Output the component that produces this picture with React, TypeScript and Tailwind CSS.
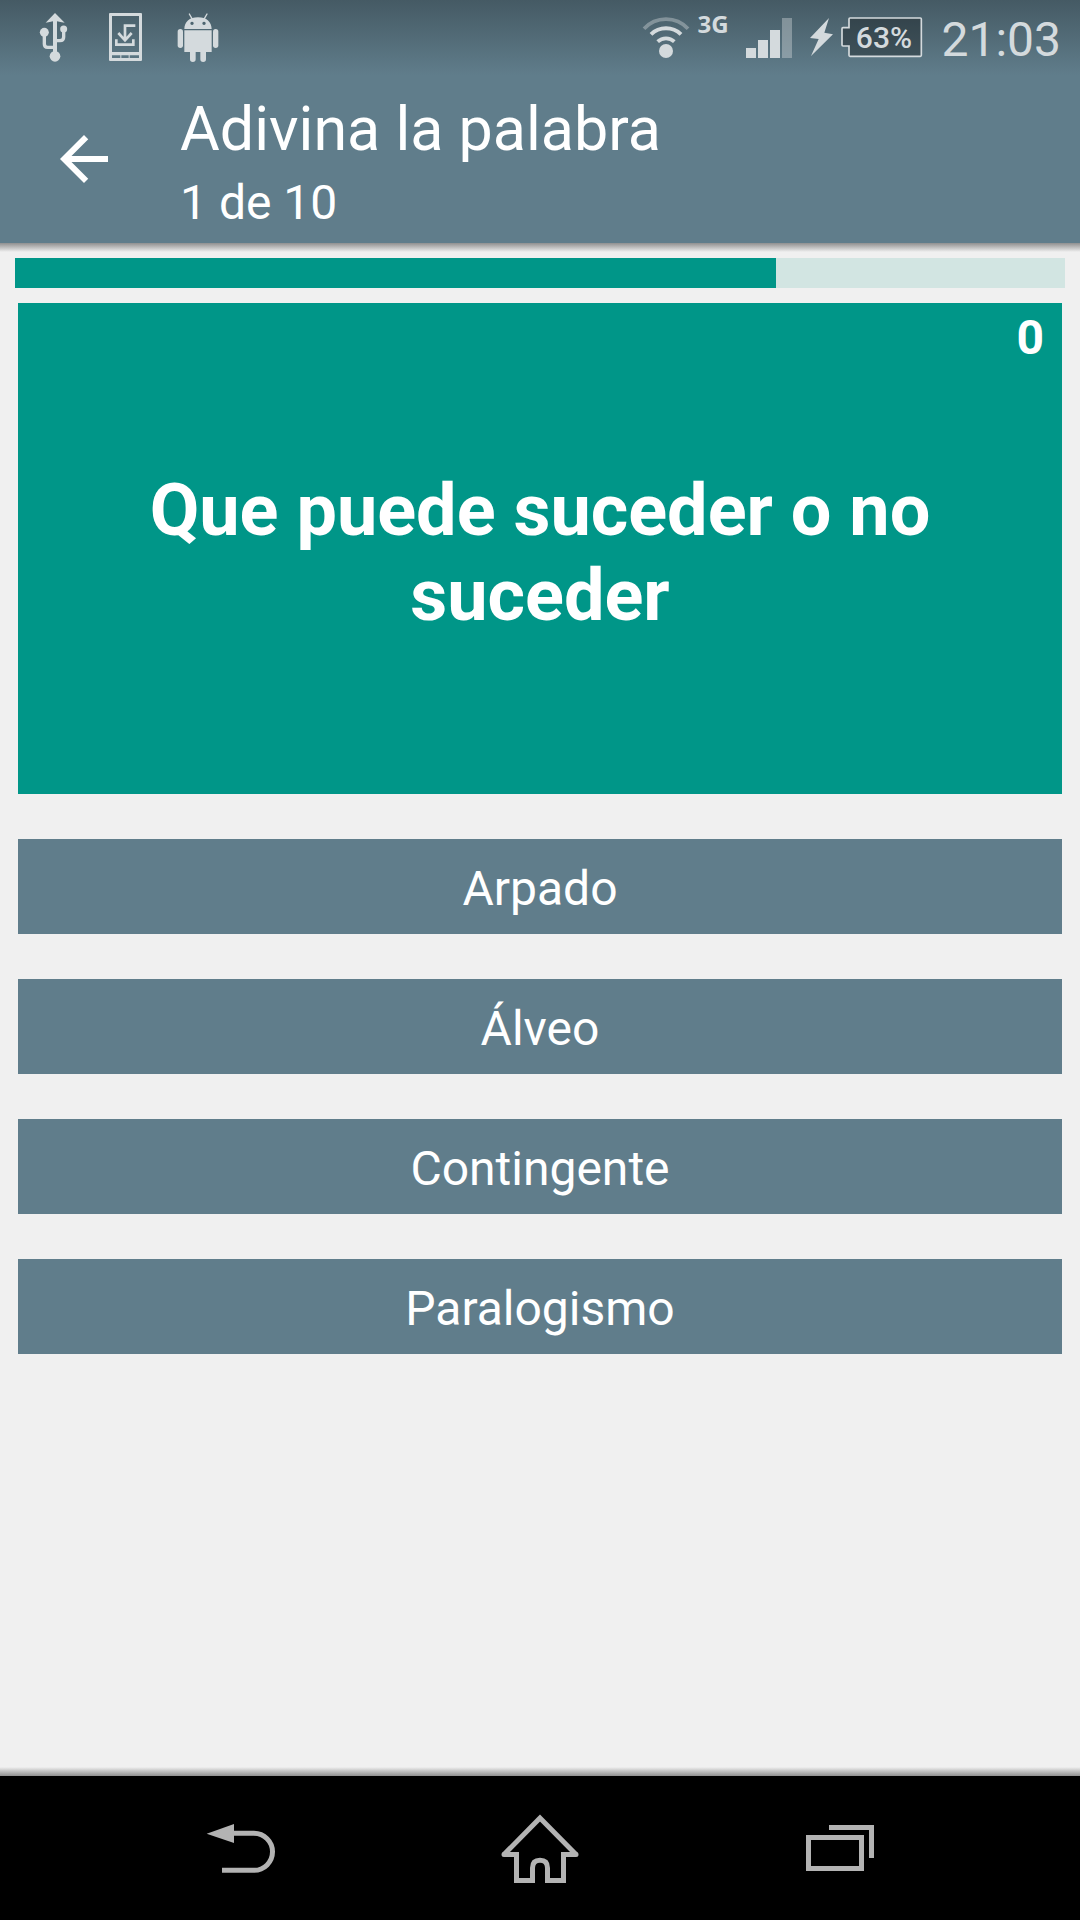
import type { ReactNode } from "react";

const ANSWERS = ["Arpado", "Álveo", "Contingente", "Paralogismo"];
const TIME_LEFT = 72.5;

function UsbIcon() {
  return (
    <svg className="h-[75px] w-[72px]" viewBox="54 0 216 225" aria-hidden="true">
      <path d="M165 39 L194 68 Q180 66 171 64 V156 H159 V64 Q150 66 137 68 Z" fill="#d4dadd" />
      <circle cx="133" cy="97" r="13.5" fill="#d4dadd" />
      <circle cx="191" cy="87" r="10.5" fill="#d4dadd" />
      <circle cx="165" cy="169" r="16" fill="#d4dadd" />
      <path d="M133 97 V132 Q133 142 143 142 H165 M191 87 V111 Q191 122 180 122 H165" fill="none" stroke="#d4dadd" strokeWidth="10" />
    </svg>
  );
}

function DeviceUpdateIcon() {
  return (
    <svg className="h-[75px] w-[72px]" viewBox="270 0 216 225" aria-hidden="true">
      <path
        fillRule="evenodd"
        d="M330 39 H423 Q426 39 426 42 V180 Q426 183 423 183 H330 Q327 183 327 180 V42 Q327 39 330 39 Z M336 48 V156 H417 V48 Z M336 166 V174 H361 V166 Z M364 166 V174 H386 V166 Z M389 166 V174 H417 V166 Z"
        fill="#d4dadd"
      />
      <path d="M406 77 H375 V120 M355 99 L375 121 L395 99" fill="none" stroke="#d4dadd" strokeWidth="8" />
      <path d="M349 118 V134 H400 V118" fill="none" stroke="#d4dadd" strokeWidth="8" />
    </svg>
  );
}

function AndroidIcon() {
  return (
    <svg className="h-[75px] w-[72px]" viewBox="486 0 216 225" aria-hidden="true">
      <path
        fillRule="evenodd"
        d="M553 87 C553 66 568 52 594 52 C620 52 635 66 635 87 Z M576 65 a5 5 0 1 0 0.1 0 Z M612 65 a5 5 0 1 0 0.1 0 Z"
        fill="#d4dadd"
      />
      <path d="M568 42 L576 56 M621 42 L613 56" stroke="#d4dadd" strokeWidth="4" strokeLinecap="round" />
      <path d="M553 91 H635 V156 H618 V178 Q618 186 609.500 186 Q601 186 601 178 V156 H587 V178 Q587 186 578.500 186 Q570 186 570 178 V156 H553 Z" fill="#d4dadd" />
      <rect x="533" y="87" width="16" height="57" rx="8" fill="#d4dadd" />
      <rect x="639" y="87" width="16" height="57" rx="8" fill="#d4dadd" />
    </svg>
  );
}

function WifiIcon() {
  return (
    <svg className="h-[75px] w-[52px]" viewBox="60 0 156 225" aria-hidden="true">
      <circle cx="138" cy="153" r="21" fill="#d4dadd" />
      <g fill="none" stroke="#d4dadd">
        <path d="M113 125 A36 36 0 0 1 163 125" strokeWidth="11" />
        <path d="M93 103 A65 65 0 0 1 183 103" strokeWidth="12" />
        <path d="M72 86 A90 90 0 0 1 204 86" strokeWidth="11" strokeOpacity="0.4" />
      </g>
    </svg>
  );
}

function SignalIcon() {
  return (
    <svg className="h-[75px] w-12" viewBox="375 0 144 225" aria-hidden="true">
      <path d="M378 144 h30 v30 h-30 Z M414 120 h30 v54 h-30 Z M450 90 h30 v84 h-30 Z" fill="#d4dadd" />
      <path d="M486 54 h30 v120 h-30 Z" fill="#d4dadd" fillOpacity="0.4" />
    </svg>
  );
}

function Battery() {
  return (
    <div className="ml-4 flex items-center gap-1.5">
      <svg className="h-[75px] w-[25px]" viewBox="27 0 75 225" aria-hidden="true">
        <path d="M87 54 L30 114 L56 117 L33 168 L99 103 L73 98 Z" fill="#d4dadd" />
      </svg>
      <div className="relative">
        <svg className="h-[75px] w-[83px]" viewBox="120 0 249 225" aria-hidden="true">
          <path
            d="M150 54 H361 Q364 54 364 57 V166 Q364 169 361 169 H150 Q147 169 147 166 V138 H129 Q126 138 126 135 V86 Q126 83 129 83 H147 V57 Q147 54 150 54 Z"
            fill="#000000"
            fillOpacity="0.3"
            stroke="#d4dadd"
            strokeWidth="5"
          />
        </svg>
        <span className="absolute inset-0 flex items-center justify-center pl-1 text-[30px] font-medium">63%</span>
      </div>
    </div>
  );
}

function StatusBar() {
  return (
    <div className="flex h-[75px] items-center bg-linear-to-b from-[#455a64] to-[#607d8b] pr-[19px] pl-[18px] text-[#d4dadd]">
      <UsbIcon />
      <DeviceUpdateIcon />
      <AndroidIcon />
      <div className="ml-auto flex items-center">
        <WifiIcon />
        <span className="w-[53px] self-start pt-2.5 pl-[5px] font-['Open_Sans',sans-serif] text-2xl leading-7 font-bold">3G</span>
        <SignalIcon />
        <Battery />
        <span className="ml-[18px] pt-1 text-5xl leading-14 font-normal">21:03</span>
      </div>
    </div>
  );
}

function NavButton({ label, children }: { label: string; children: ReactNode }) {
  return (
    <button type="button" aria-label={label} className="flex flex-1 items-center justify-center">
      <svg className="h-36 w-24" fill="none" stroke="#b3b3b3" strokeWidth="15" viewBox="96 48 288 432">
        {children}
      </svg>
    </button>
  );
}

export default function App() {
  return (
    <div className="flex min-h-screen flex-col bg-[#f0f0f0] font-[Roboto,sans-serif] text-white">
      <header className="relative bg-[#607d8b]">
        <StatusBar />
        <div className="flex h-[168px] items-center gap-[60px] px-12">
          <button type="button" aria-label="Atrás">
            <svg className="size-[72px]" viewBox="0 0 24 24" fill="currentColor">
              <path d="M20 11H7.83l5.590-5.590L12 4l-8 8 8 8 1.410-1.410L7.830 13H20v-2z" />
            </svg>
          </button>
          <div className="pt-2">
            <h1 className="text-[61px] leading-[68px] font-normal">Adivina la palabra</h1>
            <p className="mt-3 text-5xl leading-14">1 de 10</p>
          </div>
        </div>
        <div className="absolute inset-x-0 top-full h-[9px] bg-linear-to-b from-[#909090] to-[#f0f0f0]" />
      </header>

      <main className="flex flex-1 flex-col px-[15px] pt-[15px]">
        <div role="progressbar" aria-label="Tiempo" aria-valuenow={TIME_LEFT} aria-valuemin={0} aria-valuemax={100} className="h-[30px] bg-[#d2e5e2]">
          <div className="h-full bg-[#009688]" style={{ width: `${TIME_LEFT}%` }} />
        </div>
        <div className="flex flex-col gap-[45px] px-[3px] pt-[15px]">
          <section className="relative flex min-h-[491px] items-center justify-center bg-[#009688] px-16 pt-2">
            <span className="absolute top-[7px] right-[18px] text-5xl leading-14 font-bold">0</span>
            <h2 className="text-center text-7xl leading-[85px] font-bold">Que puede suceder o no suceder</h2>
          </section>
          {ANSWERS.map((answer) => (
            <button key={answer} type="button" className="h-[95px] bg-[#607d8b] pt-1 text-5xl leading-14">
              {answer}
            </button>
          ))}
        </div>
      </main>

      <div className="h-[9px] bg-linear-to-b from-[#f0f0f0] to-[#909090]" />
      <nav className="flex h-36 bg-black px-[90px]">
        <NavButton label="Volver">
          <path d="M140 221 L222 192 V249 Z" fill="#b3b3b3" stroke="none" />
          <path d="M221 220 H282 A55.500 55.500 0 0 1 282 331 H186" />
        </NavButton>
        <NavButton label="Inicio">
          <path
            d="M240 174 L132 283.500 H169.500 V361.500 H217.500 V324 Q217.500 301 240 301 Q262.500 301 262.500 324 V361.500 H310.500 V283.500 H348 Z"
            strokeLinejoin="miter"
            strokeMiterlimit="2"
          />
          <path d="M132 283.500 h0.1 M348 283.500 h0.1" strokeLinecap="round" />
        </NavButton>
        <NavButton label="Recientes">
          <rect x="145.500" y="232.500" width="159" height="93" />
          <path d="M207 202.500 H334.500 V294" />
        </NavButton>
      </nav>
    </div>
  );
}
